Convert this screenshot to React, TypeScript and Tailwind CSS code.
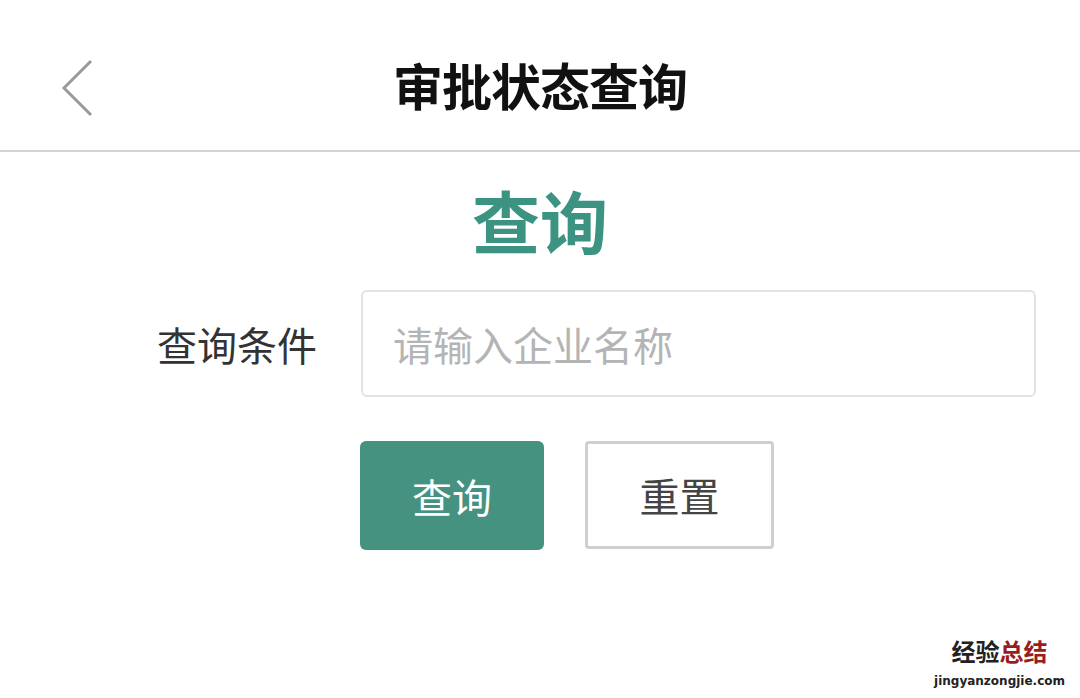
import React from 'react'

const font = {fontFamily: '"Noto Sans CJK SC", "Noto Sans", sans-serif'}

export default function App() {
  return (
    <div className="relative w-[1080px] h-[698px] bg-white overflow-hidden" style={font}>
      <div className="relative h-[152px] border-b-2 border-[#d4d4d4] flex items-center justify-center">
        <svg className="absolute left-[60px] top-[58px]" width="36" height="60" viewBox="0 0 36 60">
          <polyline points="31,3 4,30 31,57" fill="none" stroke="#9a9a9a" strokeWidth="3" />
        </svg>
        <h1 className="text-[50px] leading-none font-bold text-[#111] pt-[18px] tracking-[-1px]">审批状态查询</h1>
      </div>

      <div className="flex justify-center pt-[34px]">
        <h2 className="text-[68px] leading-none font-bold text-[#3d9382]">查询</h2>
      </div>

      <div className="flex items-center pl-[157px] pt-[36px] gap-[44px]">
        <span className="text-[40px] leading-none text-[#333] w-[160px]">查询条件</span>
        <input
          placeholder="请输入企业名称"
          className="w-[675px] h-[107px] border-2 border-[#e3e3e3] rounded-[6px] px-[30px] text-[40px] placeholder:text-[#b4b4b4] text-[#333] outline-none"
          style={font}
        />
      </div>

      <div className="flex pl-[360px] pt-[44px] gap-[41px]">
        <button className="w-[184px] h-[109px] rounded-[6px] bg-[#44927f] text-white text-[40px] leading-none">
          查询
        </button>
        <button className="w-[189px] h-[108px] rounded-[4px] border-[3px] border-[#cfcfcf] bg-white text-[#444] text-[40px] leading-none">
          重置
        </button>
      </div>

      <div className="absolute right-[15px] bottom-[11px] flex flex-col items-center">
        <div className="text-[24px] leading-none font-bold">
          <span className="text-[#222]">经验</span>
          <span className="text-[#9b1c1c]">总结</span>
        </div>
        <div className="text-[12px] leading-none mt-[12px] text-[#222] font-bold" style={{fontFamily: '"DejaVu Sans", sans-serif'}}>
          jingyanzongjie.com
        </div>
      </div>
    </div>
  )
}
